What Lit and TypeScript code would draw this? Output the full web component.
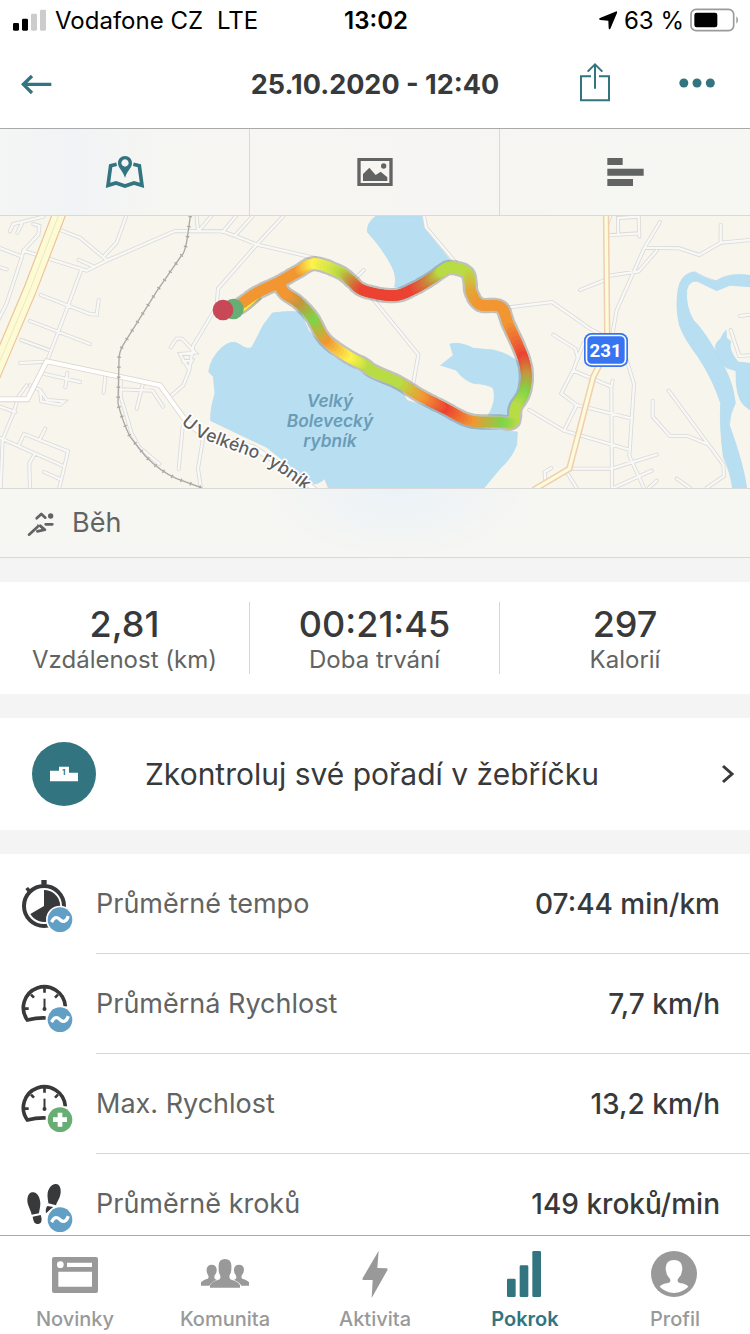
import { LitElement, html, svg, css } from "lit";
import { customElement } from "lit/decorators.js";

type Rgb = [number, number, number];
type RoutePoint = [number, number, Rgb];

const ORANGE: Rgb = [242, 150, 50];
const YELLOW: Rgb = [255, 243, 75];
const LIME: Rgb = [184, 220, 68];
const GREEN: Rgb = [128, 212, 72];
const RED: Rgb = [236, 66, 50];
const OLIVE: Rgb = [196, 150, 62];

const ROUTE: RoutePoint[] = [
  [705, 294, ORANGE], [735, 273, ORANGE], [775, 246, ORANGE], [835, 218, ORANGE], [895, 184, ORANGE],
  [945, 161, YELLOW], [1022, 188, LIME], [1055, 214, OLIVE], [1092, 242, RED], [1180, 257, RED],
  [1240, 237, RED], [1295, 205, OLIVE], [1325, 184, LIME], [1352, 172, LIME], [1403, 190, LIME],
  [1414, 247, [224, 168, 56]], [1440, 284, ORANGE], [1502, 291, ORANGE], [1526, 345, ORANGE],
  [1568, 440, RED], [1579, 498, OLIVE], [1571, 550, GREEN], [1547, 592, LIME], [1538, 636, LIME],
  [1495, 636, GREEN], [1410, 632, ORANGE], [1332, 594, RED], [1262, 558, ORANGE], [1192, 516, LIME],
  [1120, 484, LIME], [1092, 464, LIME], [1042, 438, YELLOW], [975, 388, ORANGE], [936, 322, GREEN],
  [892, 275, OLIVE], [856, 251, ORANGE], [835, 222, ORANGE],
];

function smoothRoute(points: RoutePoint[], steps = 8): RoutePoint[] {
  const out: RoutePoint[] = [];
  const spline = (a: number, b: number, c: number, d: number, t: number) =>
    0.5 * (2 * b + (c - a) * t + (2 * a - 5 * b + 4 * c - d) * t * t + (3 * b - a - 3 * c + d) * t * t * t);
  for (let i = 0; i < points.length - 1; i++) {
    const p0 = points[Math.max(0, i - 1)];
    const p1 = points[i];
    const p2 = points[i + 1];
    const p3 = points[Math.min(points.length - 1, i + 2)];
    for (let s = 0; s < steps; s++) {
      const t = s / steps;
      out.push([
        spline(p0[0], p1[0], p2[0], p3[0], t),
        spline(p0[1], p1[1], p2[1], p3[1], t),
        p1[2].map((v, k) => Math.round(v + (p2[2][k] - v) * t)) as Rgb,
      ]);
    }
  }
  out.push(points[points.length - 1]);
  return out;
}

const MINOR_ROADS = [
  "M30 64 L40 42 L130 20", "M52 68 L66 40", "M100 42 L118 48 L115 74 L70 122 L66 140 L20 280 L-10 340",
  "M0 114 L66 140", "M0 172 L20 178", "M70 122 L260 182 L320 152 L525 63 L668 64 L706 78 L772 104 L945 144",
  "M180 60 L240 83 L320 150", "M378 20 L350 98 L314 136", "M236 150 L282 170", "M243 182 L205 285 L142 452",
  "M122 255 L270 312 L290 314 L296 270", "M90 333 L270 402", "M64 390 L146 420", "M60 459 L140 455",
  "M126 490 L240 516", "M202 488 L196 532", "M316 496 L311 548", "M362 504 L362 560 L395 670 L418 712 L478 762",
  "M362 538 L458 542 L489 590", "M430 516 L410 596", "M0 420 L8 420", "M0 590 L46 606",
  "M80 526 L55 560 L40 610 L8 688 L2 834", "M0 684 L190 768", "M56 706 L72 672 L204 724 L178 834",
  "M118 690 L136 656", "M104 732 L88 760 L90 834", "M132 786 L182 808", "M90 526 L120 540 L124 574 L180 584 L192 574 L140 570 L124 545",
  "M590 18 L594 60", "M634 18 L598 60", "M708 18 L668 66", "M758 18 L706 76", "M850 18 L770 104 L654 236 L650 290 L580 406 L568 480 L550 526 L508 562",
  "M512 412 L530 386 L546 386 L586 428 L540 432 L564 474 L576 452 L548 454", "M548 650 L536 778", "M610 680 L594 776 L602 830",
  "M1272 18 L1278 52 L1365 155", "M1092 180 L1055 215", "M1115 262 L1255 434 L1240 520",
  "M1528 292 L1656 276 L1770 356 L1800 372", "M1660 374 L1726 416 L1734 446", "M1750 400 L1720 480 L1684 550 L1730 585 L1692 662",
  "M1588 600 L1692 662 L1884 718", "M1720 482 L1834 530", "M1730 585 L1896 626", "M1838 512 L1834 530 L1836 834",
  "M1880 450 L1902 522 L1888 738 L1932 834", "M1712 776 L1836 776 L1970 734", "M1700 786 L1730 834", "M1840 834 L1955 782",
  "M1946 834 L1970 812", "M1636 812 L1634 786 L1654 774", "M1740 240 L1820 208", "M1822 198 L1916 184 L1970 122",
  "M1980 36 L1934 112 L1850 300 L1836 380", "M1934 113 L2038 115 L2098 135 L2162 98 L2250 90", "M2162 98 L2162 45",
  "M1822 76 L1916 70", "M1854 74 L1854 24 L1916 20 L1918 80", "M1830 20 L1820 50", "M2250 314 L2220 318",
  "M2192 360 L2218 438 L2250 436", "M1958 572 L1958 620 L2010 678 L2062 678 L2126 704", "M2006 542 L2170 764 L2172 798 L2120 834",
  "M2030 806 L2070 834",
];

const LAKES = [
  "M817 309 Q870 302 902 306 L925 360 L1000 440 L1120 508 L1200 535 L1222 572 L1290 590 L1360 630 L1440 655 L1552 666 L1550 705 Q1535 745 1500 776 L1452 834 L985 834 L974 806 Q955 824 936 822 L800 712 L632 632 Q630 600 645 550 L640 500 L626 486 Q632 444 664 414 Q695 386 720 404 Q748 424 758 408 L790 345 Z",
  "M1128 18 Q1100 38 1102 66 Q1150 118 1176 170 Q1192 200 1184 230 L1210 235 L1352 152 L1290 75 Q1270 45 1265 18 Z",
  "M1322 466 L1360 436 L1350 402 Q1380 394 1420 415 L1480 420 Q1530 432 1560 460 L1575 530 L1545 620 L1465 615 Q1490 575 1480 534 Q1460 522 1420 520 Q1390 510 1368 480 Z",
  "M2250 196 Q2190 186 2148 212 Q2118 206 2084 185 Q2042 190 2034 240 Q2026 290 2038 345 Q2052 385 2094 440 Q2140 510 2162 580 Q2158 650 2170 740 Q2192 790 2198 834 L2240 834 Q2230 760 2188 645 Q2190 610 2206 580 Q2200 520 2170 466 Q2120 370 2080 330 Q2056 290 2060 240 Q2068 210 2092 214 L2150 242 L2190 226 L2250 230 Z",
  "M2178 361 L2168 374 L2162 386 Q2144 400 2146 418 Q2156 456 2180 474 L2208 482 Q2206 560 2232 586 L2250 600 L2250 460 L2214 456 Q2184 420 2192 394 L2180 384 Z",
];

const ARTERIAL = "M-10 568 L82 568 L140 454 L480 526 L560 636 L600 668 L760 712 L850 770 L960 850";

function waveBadge(cx: number, cy: number) {
  return svg`<circle cx=${cx} cy=${cy} r="42" fill="#fff"/><circle cx=${cx} cy=${cy} r="37" fill="#619fc4"/>
    <path d="M${cx - 23} ${cy + 3} c7 -13 17 -10 23 -3 c7 8 18 7 23 -6" fill="none" stroke="#fff" stroke-width="10" stroke-linecap="square"/>`;
}

function plusBadge(cx: number, cy: number) {
  return svg`<circle cx=${cx} cy=${cy} r="42" fill="#fff"/><circle cx=${cx} cy=${cy} r="37" fill="#67ae74"/>
    <path d="M${cx - 21} ${cy} h42 M${cx} ${cy - 21} v42" stroke="#fff" stroke-width="14"/>`;
}

const gauge = svg`
  <path d="M196 139 A63 63 0 1 0 82 180 Q110 173 137 174" fill="none" stroke="#37393b" stroke-width="11"/>
  <path d="M133.500 80 v18 M93 104 l9 9 M174 104 l-9 9 M70 146 h16" stroke="#37393b" stroke-width="8"/>
  <path d="M133.500 116 v30" stroke="#37393b" stroke-width="6"/><circle cx="133.500" cy="147" r="6" fill="#37393b"/>`;

const METRICS = [
  {
    label: "Průměrné tempo",
    value: "07:44 min/km",
    box: "63 492 156 180",
    icon: svg`<circle cx="132" cy="588" r="60" fill="none" stroke="#37393b" stroke-width="12"/>
      <path d="M124 510 h16 v14 h-16 z M76 537 l8 -6 l11 11 l-8 9 z" fill="#37393b"/>
      <path d="M132 540 A48 48 0 1 1 91 612 L132 588 Z" fill="#37393b"/>${waveBadge(180, 629)}`,
  },
  { label: "Průměrná Rychlost", value: "7,7 km/h", box: "63 42 156 180", icon: svg`${gauge}${waveBadge(180, 179)}` },
  { label: "Max. Rychlost", value: "13,2 km/h", box: "63 42 156 180", icon: svg`${gauge}${plusBadge(180, 179)}` },
  {
    label: "Průměrně kroků",
    value: "149 kroků/min",
    box: "63 642 156 180",
    icon: svg`<g fill="#37393b"><path d="M96 697 C108 694 120 706 121 730 C121 743 118 750 117 760 L95 764 C92 748 83 738 82 722 C82 707 88 698 96 697 Z"/>
      <path d="M98 770 L122 765 C128 781 124 791 114 792 C103 792 100 784 98 770 Z"/>
      <path d="M168 672 C179 673 183 684 182 698 C180 716 172 722 168 736 L145 730 C145 720 141 712 143 698 C147 682 156 671 168 672 Z"/>
      <path d="M142 738 L160 741 L138 760 C136 750 138 743 142 738 Z"/></g>${waveBadge(180, 779)}`,
  },
];

const NAV = [
  {
    label: "Novinky",
    box: "150 60 150 144",
    icon: svg`<path fill-rule="evenodd" d="M162 81 h126 q6 0 6 6 v96 q0 6 -6 6 h-126 q-6 0 -6 -6 v-96 q0 -6 6 -6 Z M201 98 v13 h75 v-13 Z M175 125 v45 h101 v-45 Z M171 104 a10 10 0 1 0 20 0 a10 10 0 1 0 -20 0 Z"/>`,
  },
  {
    label: "Komunita",
    box: "597 60 150 144",
    icon: svg`<path d="M600 167 v-10 q4 -6 20 -11 q5 -4 1 -11 q-5 -8 -4 -17 q1 -14 15 -14 q14 0 15 14 q1 9 -5 17 q-4 7 0 12 l6 3 q-18 6 -23 17 Z"/>
      <path d="M744 167 v-10 q-4 -6 -20 -11 q-5 -4 -1 -11 q6 -8 6 -17 q-1 -14 -15 -14 q-14 0 -15 14 q-1 9 5 17 q4 7 0 12 l-6 3 q18 6 23 17 Z"/>
      <path d="M627 173 v-7 q3 -10 29 -18 q5 -6 0 -15 q-4 -5 -3 -28 q1 -18 19 -18 q18 0 19 18 q1 23 -4 28 q-4 9 1 15 q26 8 29 18 v7 Z"/>`,
  },
  { label: "Aktivita", box: "1050 60 150 144", icon: svg`<path d="M1136 62 L1087 146 Q1087 150 1091 150 L1118 150 L1115 204 L1163 119 Q1163 115 1159 115 L1132 114 Z"/>` },
  {
    label: "Pokrok",
    box: "375 60 150 144",
    active: true,
    icon: svg`<rect x="396" y="146" width="26" height="55" rx="4"/><rect x="434" y="106" width="26" height="95" rx="4"/><rect x="472" y="63" width="26" height="138" rx="4"/>`,
  },
  {
    label: "Profil",
    box: "825 60 150 144",
    icon: svg`<circle cx="897" cy="132" r="69"/><path fill="#fff" d="M872 113 Q873 91 897 90 Q921 91 922 113 Q922 134 911 144 Q903 154 914 159 Q936 162 940 170 Q922 188 897 189 Q872 188 854 170 Q858 162 880 159 Q891 154 883 144 Q872 134 872 113 Z"/>`,
  },
];

@customElement("route-map")
class RouteMap extends LitElement {
  static styles = css`
    :host { display: block; background: #f8f5ec; }
    svg { display: block; width: 100%; height: auto; }
    .water { fill: #b8dff1; stroke: #b2daee; stroke-width: 2; }
    .casing { fill: none; stroke: #dadad8; stroke-width: 12; stroke-linecap: round; }
    .road { fill: none; stroke: #f8f8f7; stroke-width: 7; stroke-linecap: round; }
    .place { font: italic 600 52px/1 Inter, sans-serif; fill: #6b9cb7; text-anchor: middle; }
    .street { font: 500 53px/1 Inter, sans-serif; fill: #5f5f5f; stroke: #fff; stroke-width: 10; paint-order: stroke; stroke-linejoin: round; }
    .shield { font: 700 56px/1 "Liberation Sans Narrow", Roboto, sans-serif; fill: #fff; text-anchor: middle; }
  `;

  render() {
    const route = smoothRoute(ROUTE);
    const outline = "M" + route.map((p) => `${p[0].toFixed(0)} ${p[1].toFixed(0)}`).join(" L");
    return html`<svg viewBox="0 18 2250 816" role="img" aria-label="Mapa trasy">
      ${LAKES.map((d) => svg`<path class="water" d=${d}/>`)}
      <path d=${MINOR_ROADS.join(" ")} class="casing"/>
      <path d=${MINOR_ROADS.join(" ")} class="road"/>
      <path d=${ARTERIAL} fill="none" stroke="#dcd7cc" stroke-width="17"/>
      <path d=${ARTERIAL} fill="none" stroke="#fff" stroke-width="12"/>
      <path d="M182 0 L90 240 L-20 500" fill="none" stroke="#ecc494" stroke-width="42"/>
      <path d="M182 0 L90 240 L-20 500" fill="none" stroke="#fcfbd6" stroke-width="35"/>
      <path d="M182 0 L90 240 L-20 500" fill="none" stroke="#f3e7b4" stroke-width="3"/>
      <path d="M1818 0 L1822 420 L1780 500 L1708 776 L1600 840" fill="none" stroke="#efcfae" stroke-width="19"/>
      <path d="M1818 0 L1822 420 L1780 500 L1708 776 L1600 840" fill="none" stroke="#fdfbdc" stroke-width="10"/>
      <g fill="none" stroke="#aaa9a5">
        <path d="M571 18 L564 70 Q556 128 545 136 L470 244 L370 404 Q357 425 357 450 L354 580 Q366 630 390 680 L436 738 Q480 784 530 806 L606 834" stroke-width="4"/>
        <path d="M571 18 L564 70 Q556 128 545 136 L470 244 L370 404 Q357 425 357 450 L354 580 Q366 630 390 680 L436 738 Q480 784 530 806 L606 834" stroke-width="11" stroke-dasharray="4 26"/>
      </g>
      <path d="M720 304 Q740 294 778 258" fill="none" stroke="#bdbab2" stroke-width="24"/>
      <path d="M720 300 Q740 290 776 256" fill="none" stroke="#ffee3c" stroke-width="18"/>
      <path d=${outline} fill="none" stroke="#777" stroke-opacity="0.42" stroke-width="46" stroke-linejoin="round"/>
      <path d="M724 302 Q742 291 768 264" fill="none" stroke="#ffee3c" stroke-width="10"/>
      ${route.slice(0, -1).map(
        (p, i) => svg`<line x1=${p[0].toFixed(1)} y1=${p[1].toFixed(1)} x2=${route[i + 1][0].toFixed(1)} y2=${route[i + 1][1].toFixed(1)}
          stroke="rgb(${p[2].join(",")})" stroke-width="32" stroke-linecap="round"/>`
      )}
      <circle cx="700" cy="297" r="31" fill="#67ae74"/>
      <circle cx="669" cy="300" r="31" fill="#c84858"/>
      <text class="place" x="990" y="590">Velký</text>
      <text class="place" x="990" y="651">Bolevecký</text>
      <text class="place" x="990" y="711">rybník</text>
      <path id="street" d="M542 640 L590 680 Q700 722 775 748 Q850 790 925 850 L1000 910" fill="none"/>
      <text class="street"><textPath href="#street">U Velkého rybník</textPath></text>
      <rect x="1752" y="369" width="132" height="102" rx="22" fill="#3674f2"/>
      <rect x="1759.500" y="376.500" width="117" height="87" rx="15" fill="none" stroke="#fff" stroke-width="5"/>
      <text class="shield" x="1817" y="440">231</text>
    </svg>`;
  }
}

@customElement("app-root")
class AppRoot extends LitElement {
  static styles = css`
    :host {
      display: flex; flex-direction: column; height: 100vh; overflow: hidden; background: #fff;
      color: #37393b; font-family: Inter, "Noto Sans", sans-serif; line-height: 1.2;
    }
    * { box-sizing: border-box; }
    svg { display: block; flex: none; }
    button { border: 0; padding: 0; background: none; font: inherit; color: inherit; }
    a { color: inherit; text-decoration: none; }
    .status { display: grid; grid-template-columns: 1fr auto 1fr; align-items: center; height: 40px; padding: 0 11px 0 13px; color: #000; font-size: 24px; flex: none; }
    .status span, .time { padding-top: 2px; }
    .carrier { display: flex; align-items: center; gap: 8px; }
    .lte { margin-left: 6px; }
    .time { font-weight: 600; }
    .power { display: flex; align-items: center; justify-content: flex-end; gap: 6px; }
    .header { display: grid; grid-template-columns: 1fr auto 1fr; align-items: center; height: 89px; border-bottom: 1px solid #a9a9a9; flex: none; }
    .title { margin: 0; padding-top: 2px; font-size: 27px; font-weight: 700; }
    .back { justify-self: start; padding-left: 21px; }
    .actions { display: flex; justify-content: flex-end; align-items: center; gap: 68px; padding-right: 35px; }
    .content { flex: 1; min-height: 0; overflow: hidden; background: #f4f4f4; }
    .tabs { display: grid; grid-template-columns: repeat(3, 1fr); height: 87px; border-bottom: 1px solid #d9d9d7; background: linear-gradient(90deg, #f4f5f4 0%, #f1f3f6 10%, #f6f6f2 22%, #f6f5f3 60%, #f6f6f2 80%, #f6f7f3 100%); }
    .tab { display: flex; align-items: center; justify-content: center; border-right: 1px solid #d9d9d7; }
    .tab:last-child { border-right: 0; }
    .activity { display: flex; align-items: center; gap: 15px; height: 70px; padding-left: 26px; border: solid #d9d9d7; border-width: 1px 0; background: radial-gradient(ellipse 130px 70px at 53% 0%, #ebf2f7, transparent), #f6f6f3; color: #626463; font-size: 27px; }
    .activity span { padding-top: 1px; }
    .stats { display: grid; grid-template-columns: repeat(3, 1fr); margin: 24px 0; padding: 20px 0; background: #fff; }
    .stat { display: flex; flex-direction: column; align-items: center; height: 72px; border-right: 1px solid #d6d6d6; }
    .stat:last-child { border-right: 0; }
    .number { font-size: 36px; line-height: 44px; font-weight: 500; }
    .caption { font-size: 24px; line-height: 28px; color: #626463; }
    .ranking { display: flex; align-items: center; height: 112px; padding: 0 15px 0 32px; background: #fff; }
    .medal { display: flex; align-items: center; justify-content: center; width: 64px; height: 64px; margin-right: 49px; border-radius: 50%; background: #32747f; }
    .rank { font: 700 24px/1 Inter, sans-serif; fill: #32747f; text-anchor: middle; }
    .prompt { flex: 1; font-size: 30px; }
    .metrics { margin: 24px 0 0; padding: 0; list-style: none; background: #fff; }
    .metric { display: flex; align-items: center; gap: 23px; padding-left: 21px; }
    .line { display: flex; flex: 1; align-items: center; justify-content: space-between; height: 100px; padding: 2px 30px 0 0; border-bottom: 1px solid #d6d6d6; font-size: 27px; }
    .label { color: #626463; }
    .value { font-size: 28px; font-weight: 500; }
    .nav { display: grid; grid-template-columns: repeat(5, 1fr); height: 99px; border-top: 1px solid #a9a9a9; background: #fff; flex: none; }
    .item { display: flex; flex-direction: column; align-items: center; gap: 9px; padding-top: 14px; color: #999; font-size: 20px; line-height: 24px; font-weight: 500; }
    .active { color: #32747f; font-weight: 600; }
  `;

  render() {
    return html`
      <div class="status">
        <div class="carrier">
          <svg width="34" height="22" viewBox="39 25 102 66"><rect x="39" y="67" width="18" height="23" rx="4"/><rect x="66" y="54" width="18" height="36" rx="4"/><rect x="93" y="39" width="18" height="51" rx="4" fill="#ccc"/><rect x="120" y="27" width="18" height="63" rx="4" fill="#ccc"/></svg>
          <span>Vodafone CZ</span><span class="lte">LTE</span>
        </div>
        <div class="time">13:02</div>
        <div class="power">
          <svg width="20" height="20" viewBox="672 32 60 60"><path d="M724 37 Q731 34 729 41 L709 88 Q705 92 704 86 L703 64 L679 62 Q672 60 678 56 Z"/></svg>
          <span>63 %</span>
          <svg width="49" height="24" viewBox="947 22 147 72"><rect x="950" y="26" width="128" height="64" rx="15" fill="none" stroke="#9b9b9b" stroke-width="5"/><rect x="960" y="36" width="69" height="44" rx="7"/><path d="M1086 47 Q1091 50 1091 58 Q1091 66 1086 69 Z" fill="#9b9b9b"/></svg>
        </div>
      </div>

      <header class="header">
        <button class="back" aria-label="Zpět">
          <svg width="31" height="21" viewBox="63 222 93 63" fill="none" stroke="#32747f" stroke-width="10"><path d="M154 253 H70 M96 228 L70 253 L96 279"/></svg>
        </button>
        <h1 class="title">25.10.2020 - 12:40</h1>
        <div class="actions">
          <button aria-label="Sdílet">
            <svg width="32" height="44" viewBox="612 186 96 132" fill="none" stroke="#32747f" stroke-width="6"><path d="M648 229 H618 V301 H702 V229 H672 M660 266 V194 M638 215 L660 193 L682 215"/></svg>
          </button>
          <button aria-label="Další">
            <svg width="36" height="14" viewBox="912 231 108 42" fill="#32747f"><circle cx="926.500" cy="249" r="13.500"/><circle cx="966" cy="249" r="13.500"/><circle cx="1006" cy="249" r="13.500"/></svg>
          </button>
        </div>
      </header>

      <main class="content">
        <div class="tabs">
          <button class="tab" aria-label="Mapa">
            <svg width="40" height="34" viewBox="315 462 120 102" fill="none" stroke="#32747f" stroke-width="11"><path d="M350 490 L332 494 L324 553 L348 546 L375 555 L402 546 L426 553 L418 494 L400 490"/><path d="M375 465 C387 465 396 474 396 486 C396 501 384 505 375 530 C366 505 354 501 354 486 C354 474 363 465 375 465 Z M375 475 a11 11 0 1 0 0.100 0 Z" fill="#32747f" fill-rule="evenodd" stroke="none"/></svg>
          </button>
          <button class="tab" aria-label="Fotografie">
            <svg width="36" height="28" viewBox="0 0 108 84" fill="#626463"><path fill-rule="evenodd" d="M1 0 H107 V84 H1 Z M11 9 V75 H97 V9 Z"/><path d="M18 69 V48 L37 29 L56 51 L71 41 L91 58 V69 Z"/><circle cx="80" cy="24" r="8"/></svg>
          </button>
          <button class="tab" aria-label="Podrobnosti">
            <svg width="37" height="28" viewBox="0 0 111 84" fill="#626463"><path d="M1 0 h46 v21 h-46 z M1 32 h109 v21 h-109 z M1 63 h77 v21 h-77 z"/></svg>
          </button>
        </div>
        <route-map></route-map>
        <div class="activity">
          <svg width="31" height="31" viewBox="78 72 93 93" fill="none" stroke="#626463" stroke-width="7" stroke-linecap="round" stroke-linejoin="round"><path d="M87 152 L113 128 M110 103 L124 90 L136 101 M121 125 L135 137 L112 142 M137 121 H157" stroke-width="8"/><path d="M113 123 L124 126 L127 134 Z" fill="#626463" stroke-width="3"/><circle cx="152" cy="96" r="8" fill="#626463" stroke="none"/></svg>
          <span>Běh</span>
        </div>

        <section class="stats">
          <div class="stat"><span class="number">2,81</span><span class="caption">Vzdálenost (km)</span></div>
          <div class="stat"><span class="number">00:21:45</span><span class="caption">Doba trvání</span></div>
          <div class="stat"><span class="number">297</span><span class="caption">Kalorií</span></div>
        </section>

        <a class="ranking" href="#">
          <span class="medal"><svg width="28" height="16" viewBox="150 169 84 48"><path fill="#fff" d="M150 183 H177 V171 H207 V189 H234 V215 H150 Z"/><text class="rank" x="191" y="197">1</text></svg></span>
          <span class="prompt">Zkontroluj své pořadí v žebříčku</span>
          <svg width="14" height="20" viewBox="0 0 14 20" fill="none" stroke="#37393b" stroke-width="3"><path d="M2 2 L11 10 L2 18"/></svg>
        </a>

        <ul class="metrics">
          ${METRICS.map(
            (m) => html`<li class="metric">
              <svg width="52" height="60" viewBox=${m.box}>${m.icon}</svg>
              <div class="line"><span class="label">${m.label}</span><span class="value">${m.value}</span></div>
            </li>`
          )}
        </ul>
      </main>

      <nav class="nav">
        ${NAV.map(
          (n) => html`<a class="item ${n.active ? "active" : ""}" href="#">
            <svg width="50" height="48" viewBox=${n.box} fill="currentColor">${n.icon}</svg>
            <span>${n.label}</span>
          </a>`
        )}
      </nav>
    `;
  }
}
